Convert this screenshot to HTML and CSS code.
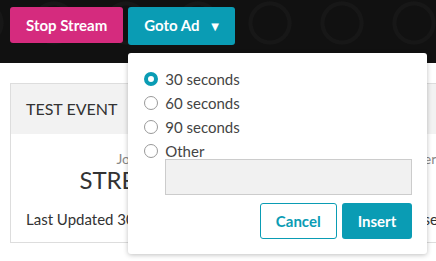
FILE: index.html
```html
<!DOCTYPE html>
<html lang="en">
<head>
    <meta charset="UTF-8">
    <meta name="viewport" content="width=device-width, initial-scale=1.0">
    <title>Live Event</title>
    <link rel="stylesheet" href="styles.css">
</head>
<body>
    <div class="topbar">
        <button class="btn btn-pink">Stop Stream</button>
        <div class="ad-menu">
            <button class="btn btn-teal">Goto Ad <span class="caret">&#9660;</span></button>
            <div class="ad-popup">
                <label class="radio-row"><input type="radio" name="adLength" checked> 30 seconds</label>
                <label class="radio-row"><input type="radio" name="adLength"> 60 seconds</label>
                <label class="radio-row"><input type="radio" name="adLength"> 90 seconds</label>
                <label class="radio-row"><input type="radio" name="adLength"> Other</label>
                <input type="text" class="other-input">
                <div class="popup-actions">
                    <button class="btn btn-outline">Cancel</button>
                    <button class="btn btn-teal">Insert</button>
                </div>
            </div>
        </div>
    </div>

    <div class="content">
        <div class="event-card">
            <div class="event-card-header">TEST EVENT</div>
            <div class="event-card-body">
                <div class="stat">
                    <div class="stat-label">Job Status</div>
                    <div class="stat-value">STREAMING</div>
                    <div class="stat-footer">Last Updated 30 seconds ago</div>
                </div>
                <div class="stat">
                    <div class="stat-label">Uploader</div>
                    <div class="stat-value">OK</div>
                    <div class="stat-footer">Last Updated 1m 30 seconds ago</div>
                </div>
            </div>
        </div>
    </div>
</body>
</html>
```

FILE: styles.css
```css
body {
    font-family: Lato, "Open Sans", sans-serif;
    margin: 0;
    padding: 0;
    background-color: #fff;
    color: #333;
    overflow: hidden;
}

.topbar {
    height: 63px;
    box-sizing: border-box;
    padding: 7px 10px;
    display: flex;
    align-items: flex-start;
    gap: 5px;
    background-color: #111;
    background-image: radial-gradient(circle, transparent 17px, #171717 18px, #171717 21px, transparent 22px);
    background-size: 72px 72px;
    background-position: 18px -13px;
}

.btn {
    font-family: inherit;
    font-size: 15px;
    font-weight: bold;
    line-height: 20px;
    padding: 8px 16px;
    border: none;
    border-radius: 3px;
    cursor: pointer;
    color: white;
}

.btn-pink {
    background-color: #d52b7e;
}

.btn-teal {
    background-color: #0a9cb4;
}

.btn-outline {
    background-color: #fff;
    color: #0a9cb4;
    border: 1px solid #0a9cb4;
    padding: 7px 15px;
}

.caret {
    font-family: "DejaVu Sans", sans-serif;
    font-size: 10px;
    margin-left: 8px;
    vertical-align: 1px;
}

.ad-menu {
    position: relative;
}

.ad-popup {
    position: absolute;
    top: 46px;
    left: 0;
    width: 299px;
    box-sizing: border-box;
    padding: 17px 15px 15px 16px;
    background: #fff;
    border-radius: 3px;
    box-shadow: 0 1px 5px rgba(0, 0, 0, 0.25);
    z-index: 10;
}

.radio-row {
    display: flex;
    align-items: center;
    height: 18px;
    margin-bottom: 6px;
    font-size: 15px;
    color: #444;
}

.radio-row:last-of-type {
    margin-bottom: 0;
}

.radio-row input {
    appearance: none;
    width: 14px;
    height: 14px;
    margin: 0 7px 0 0;
    border: 1px solid #999;
    border-radius: 50%;
    background: #fff;
}

.radio-row input:checked {
    border: 4.5px solid #0a9cb4;
}

.other-input {
    display: block;
    box-sizing: border-box;
    width: 247px;
    height: 36px;
    margin: -1px 0 0 21px;
    background: #f1f1f1;
    border: 1px solid #ccc;
}

.popup-actions {
    display: flex;
    justify-content: flex-end;
    gap: 5px;
    margin-top: 8px;
}

.content {
    padding: 20px 10px;
}

.event-card {
    width: 640px;
    border: 1px solid #ddd;
}

.event-card-header {
    background-color: #f2f2f2;
    padding: 16px 15px;
    font-size: 16px;
    line-height: 18px;
}

.event-card-body {
    display: grid;
    grid-template-columns: 244px 244px;
    column-gap: 16px;
    padding: 16px 15px 13px;
}

.stat-label {
    text-align: center;
    font-size: 14px;
    line-height: 18px;
    color: #888;
}

.stat-value {
    text-align: center;
    font-size: 24px;
    line-height: 24px;
}

.stat-footer {
    margin-top: 17px;
    font-size: 15px;
    line-height: 20px;
    white-space: nowrap;
}
```
